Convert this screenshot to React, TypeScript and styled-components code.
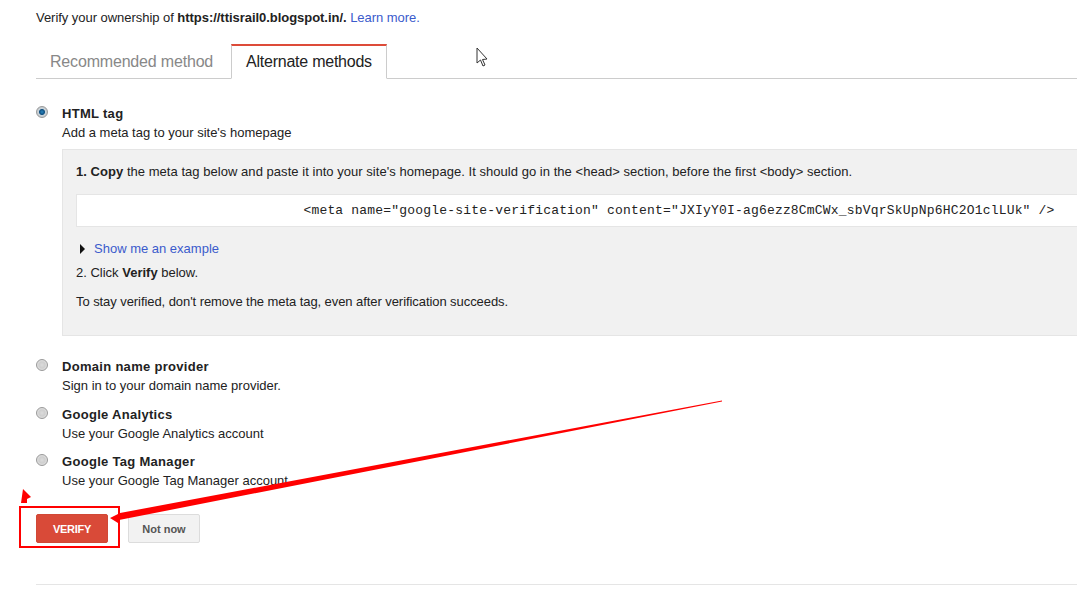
import * as React from 'react';
import styled, { createGlobalStyle } from 'styled-components';

const GlobalStyle = createGlobalStyle`
  html, body {
    margin: 0;
    padding: 0;
    background: #fff;
    overflow: hidden;
  }
  body {
    font-family: "Liberation Sans", Arial, sans-serif;
    font-size: 13px;
    color: #222;
  }
`;

const Page = styled.div`
  position: relative;
  width: 1077px;
  height: 595px;
  overflow: hidden;
  box-sizing: border-box;
  padding: 10px 0 0 36px;
`;

const Intro = styled.div`
  font-size: 13px;
  line-height: 15px;
  letter-spacing: -0.04px;
  height: 34px;
`;

const Link = styled.a`
  color: #3b5bcc;
  text-decoration: none;
`;

const Tabs = styled.div`
  display: flex;
  height: 35px;
  box-sizing: border-box;
  border-bottom: 1px solid #ccc;
`;

const Tab = styled.div<{ $active?: boolean }>`
  box-sizing: border-box;
  height: 35px;
  font-size: 16px;
  line-height: 35px;
  padding: 0 14px;
  letter-spacing: -0.18px;
  color: ${(p) => (p.$active ? '#222' : '#888')};
  ${(p) =>
    p.$active
      ? `
    background: #fff;
    border: 1px solid #ccc;
    border-top: 2px solid #dd4b39;
    border-bottom: 1px solid #fff;
    margin-left: 4px;
    line-height: 31px;
    letter-spacing: -0.24px;
  `
      : ''}
`;

const Options = styled.div`
  padding-top: 27px;
`;

const Option = styled.div<{ $gap: number }>`
  display: flex;
  margin-bottom: ${(p) => p.$gap}px;
`;

const Radio = styled.span<{ $checked?: boolean }>`
  flex: none;
  box-sizing: border-box;
  width: 12px;
  height: 12px;
  margin: 0 14px 0 0;
  border-radius: 50%;
  border: 1px solid #999;
  background: ${(p) =>
    p.$checked
      ? 'radial-gradient(circle at 50% 50%, #2a86c0 0, #0f4f80 2.5px, #c9d3da 3.5px, #bdbdbd 100%)'
      : 'radial-gradient(circle at 50% 50%, #dcdcdc 0, #cfcfcf 3px, #f2f2f2 100%)'};
`;

const OptionBody = styled.div`
  flex: 1;
  min-width: 0;
`;

const OptionTitle = styled.div`
  font-size: 13px;
  font-weight: bold;
  line-height: 15px;
  letter-spacing: 0.3px;
  margin-bottom: 4px;
`;

const OptionText = styled.div`
  font-size: 13px;
  line-height: 15px;
`;

const Panel = styled.div`
  box-sizing: border-box;
  width: 1240px;
  height: 187px;
  margin-top: 9px;
  padding: 14px 13px 0;
  background: #f1f1f1;
  border: 1px solid #e5e5e5;
  font-size: 13px;
`;

const PanelLine = styled.div<{ $top?: number; $track?: number }>`
  line-height: 15px;
  margin-top: ${(p) => p.$top ?? 0}px;
  letter-spacing: ${(p) => p.$track ?? 0}px;
`;

const CodeBox = styled.div`
  box-sizing: border-box;
  width: 1206px;
  height: 33px;
  margin-top: 15px;
  background: #fff;
  border: 1px solid #e5e5e5;
  font-family: "Liberation Mono", "Courier New", monospace;
  font-size: 13px;
  line-height: 31px;
  letter-spacing: 0.19px;
  text-align: center;
  color: #222;
`;

const Disclosure = styled.div`
  display: flex;
  align-items: center;
  margin-top: 14px;
  line-height: 15px;
`;

const Triangle = styled.span`
  width: 0;
  height: 0;
  margin: 0 9px 0 4px;
  border-left: 5px solid #111;
  border-top: 5px solid transparent;
  border-bottom: 5px solid transparent;
`;

const Buttons = styled.div`
  display: flex;
  gap: 20px;
  margin-top: 26px;
`;

const Button = styled.button<{ $primary?: boolean }>`
  box-sizing: border-box;
  width: 72px;
  height: 29px;
  padding: 0;
  border-radius: 2px;
  font-family: "Liberation Sans", Arial, sans-serif;
  font-size: 11px;
  font-weight: bold;
  letter-spacing: ${(p) => (p.$primary ? '-0.3px' : '0')};
  border: 1px solid ${(p) => (p.$primary ? '#d14836' : '#dcdcdc')};
  background: ${(p) => (p.$primary ? '#d94a38' : '#f2f2f2')};
  color: ${(p) => (p.$primary ? '#fff' : '#555')};
`;

const Divider = styled.div`
  height: 1px;
  background: #e5e5e5;
  margin-top: 41px;
`;

const Annotations = styled.svg`
  position: absolute;
  left: 0;
  top: 0;
  pointer-events: none;
`;

const App: React.FC = () => {
  return (
    <Page>
      <GlobalStyle />
      <Intro>
        Verify your ownership of <b>https://ttisrail0.blogspot.in/.</b> <Link>Learn more.</Link>
      </Intro>
      <Tabs>
        <Tab>Recommended method</Tab>
        <Tab $active>Alternate methods</Tab>
      </Tabs>
      <Options>
        <Option $gap={23}>
          <Radio $checked />
          <OptionBody>
            <OptionTitle>HTML tag</OptionTitle>
            <OptionText>Add a meta tag to your site's homepage</OptionText>
            <Panel>
              <PanelLine $track={0.04}>
                <b>1. Copy</b> the meta tag below and paste it into your site's homepage. It should go in
                the &lt;head&gt; section, before the first &lt;body&gt; section.
              </PanelLine>
              <CodeBox>
                {'<meta name="google-site-verification" content="JXIyY0I-ag6ezz8CmCWx_sbVqrSkUpNp6HC2O1clLUk" />'}
              </CodeBox>
              <Disclosure>
                <Triangle />
                <Link>Show me an example</Link>
              </Disclosure>
              <PanelLine $top={9}>
                2. Click <b>Verify</b> below.
              </PanelLine>
              <PanelLine $top={14} $track={-0.07}>
                To stay verified, don't remove the meta tag, even after verification succeeds.
              </PanelLine>
            </Panel>
          </OptionBody>
        </Option>
        <Option $gap={14}>
          <Radio />
          <OptionBody>
            <OptionTitle>Domain name provider</OptionTitle>
            <OptionText>Sign in to your domain name provider.</OptionText>
          </OptionBody>
        </Option>
        <Option $gap={13}>
          <Radio />
          <OptionBody>
            <OptionTitle>Google Analytics</OptionTitle>
            <OptionText>Use your Google Analytics account</OptionText>
          </OptionBody>
        </Option>
        <Option $gap={0}>
          <Radio />
          <OptionBody>
            <OptionTitle>Google Tag Manager</OptionTitle>
            <OptionText>Use your Google Tag Manager account</OptionText>
          </OptionBody>
        </Option>
      </Options>
      <Buttons>
        <Button $primary>VERIFY</Button>
        <Button>Not now</Button>
      </Buttons>
      <Divider />

      {/* red markup drawn on top of the screenshot */}
      <Annotations width="1077" height="595" viewBox="0 0 1077 595">
        <rect x="20" y="507" width="99" height="40" fill="none" stroke="#f00" strokeWidth="2" />
        <polygon points="722,400.5 120,513 110,518 118,523 119,520 722,401.5" fill="#f00" />
        <polygon points="23,489 31,497 27,499 27,503 21,503" fill="#f00" />
        <path
          d="M477 48 L477 63 L480.5 60 L483 66 L485 65 L482.5 59.5 L487 59 Z"
          fill="#fff"
          stroke="#333"
          strokeWidth="1"
        />
      </Annotations>
    </Page>
  );
};

export default App;
